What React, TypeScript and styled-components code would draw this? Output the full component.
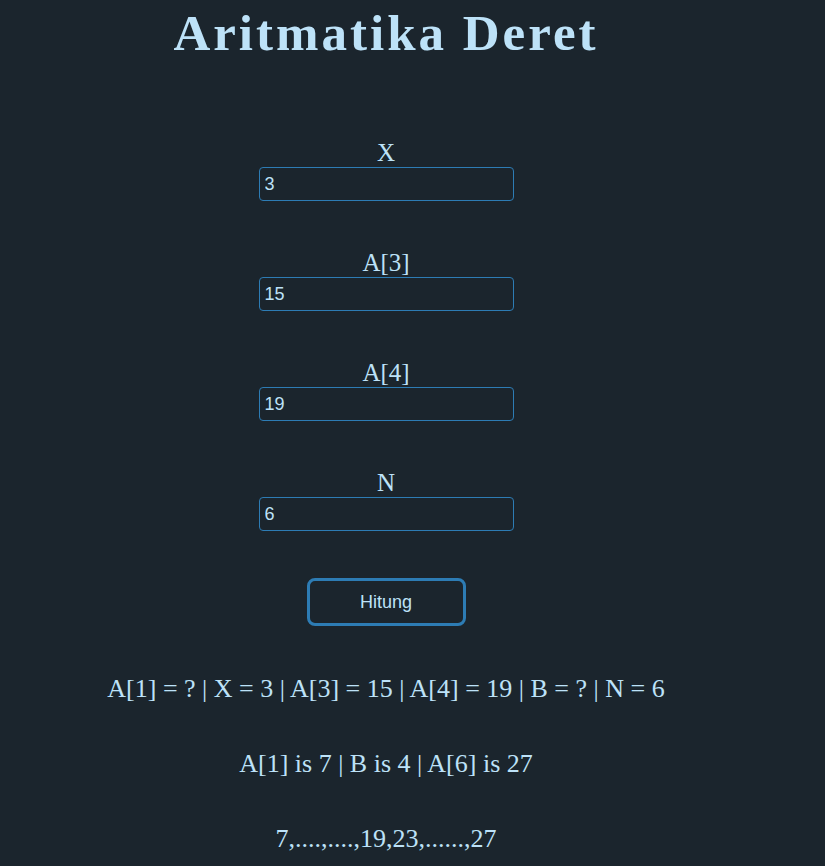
import { useState } from 'react'
import styled, { createGlobalStyle } from 'styled-components'

const GlobalStyle = createGlobalStyle`
  html, body {
    margin: 0;
    padding: 0;
    background: #1b252d;
  }
  body {
    min-height: 866px;
    font-family: "Liberation Serif", "DejaVu Serif", serif;
    color: #bde2f8;
  }
`

const Page = styled.div`
  width: 772px;
  display: flex;
  flex-direction: column;
  align-items: center;
`

const Title = styled.h1`
  margin: 5px 0 0;
  font-size: 51px;
  line-height: 57px;
  font-weight: bold;
  letter-spacing: 3px;
  color: #bde2f8;
`

const Form = styled.div`
  margin-top: 81px;
  display: flex;
  flex-direction: column;
  align-items: center;
  gap: 52px;
`

const Field = styled.label`
  display: flex;
  flex-direction: column;
  align-items: center;
`

const FieldLabel = styled.span`
  font-size: 25px;
  line-height: 20px;
  margin-bottom: 4px;
`

const Input = styled.input`
  box-sizing: border-box;
  width: 255px;
  height: 34px;
  padding: 0 5px;
  border: 1px solid #2d7cb4;
  border-radius: 4px;
  background: transparent;
  color: #bde2f8;
  font-family: "Liberation Sans", Arial, sans-serif;
  font-size: 18px;
  outline: none;
`

const Button = styled.button`
  margin-top: 47px;
  box-sizing: border-box;
  width: 159px;
  height: 48px;
  border: 3px solid #2d7cb4;
  border-radius: 8px;
  background: transparent;
  color: #bde2f8;
  font-family: "Liberation Sans", Arial, sans-serif;
  font-size: 18px;
  cursor: pointer;
`

const Result = styled.p<{ $gap: number }>`
  margin: ${p => p.$gap}px 0 0;
  font-size: 26px;
  line-height: 30px;
  white-space: nowrap;
`

export default function App() {
  const [x, setX] = useState('3')
  const [a3, setA3] = useState('15')
  const [a4, setA4] = useState('19')
  const [n, setN] = useState('6')

  const fields = [
    { label: 'X', value: x, set: setX },
    { label: 'A[3]', value: a3, set: setA3 },
    { label: 'A[4]', value: a4, set: setA4 },
    { label: 'N', value: n, set: setN },
  ]

  return (
    <>
      <GlobalStyle />
      <Page>
        <Title>Aritmatika Deret</Title>
        <Form>
          {fields.map(f => (
            <Field key={f.label}>
              <FieldLabel>{f.label}</FieldLabel>
              <Input value={f.value} onChange={e => f.set(e.target.value)} />
            </Field>
          ))}
        </Form>
        <Button>Hitung</Button>
        <Result $gap={48}>A[1] = ? | X = 3 | A[3] = 15 | A[4] = 19 | B = ? | N = 6</Result>
        <Result $gap={45}>A[1] is 7 | B is 4 | A[6] is 27</Result>
        <Result $gap={45}>7,....,....,19,23,......,27</Result>
      </Page>
    </>
  )
}
